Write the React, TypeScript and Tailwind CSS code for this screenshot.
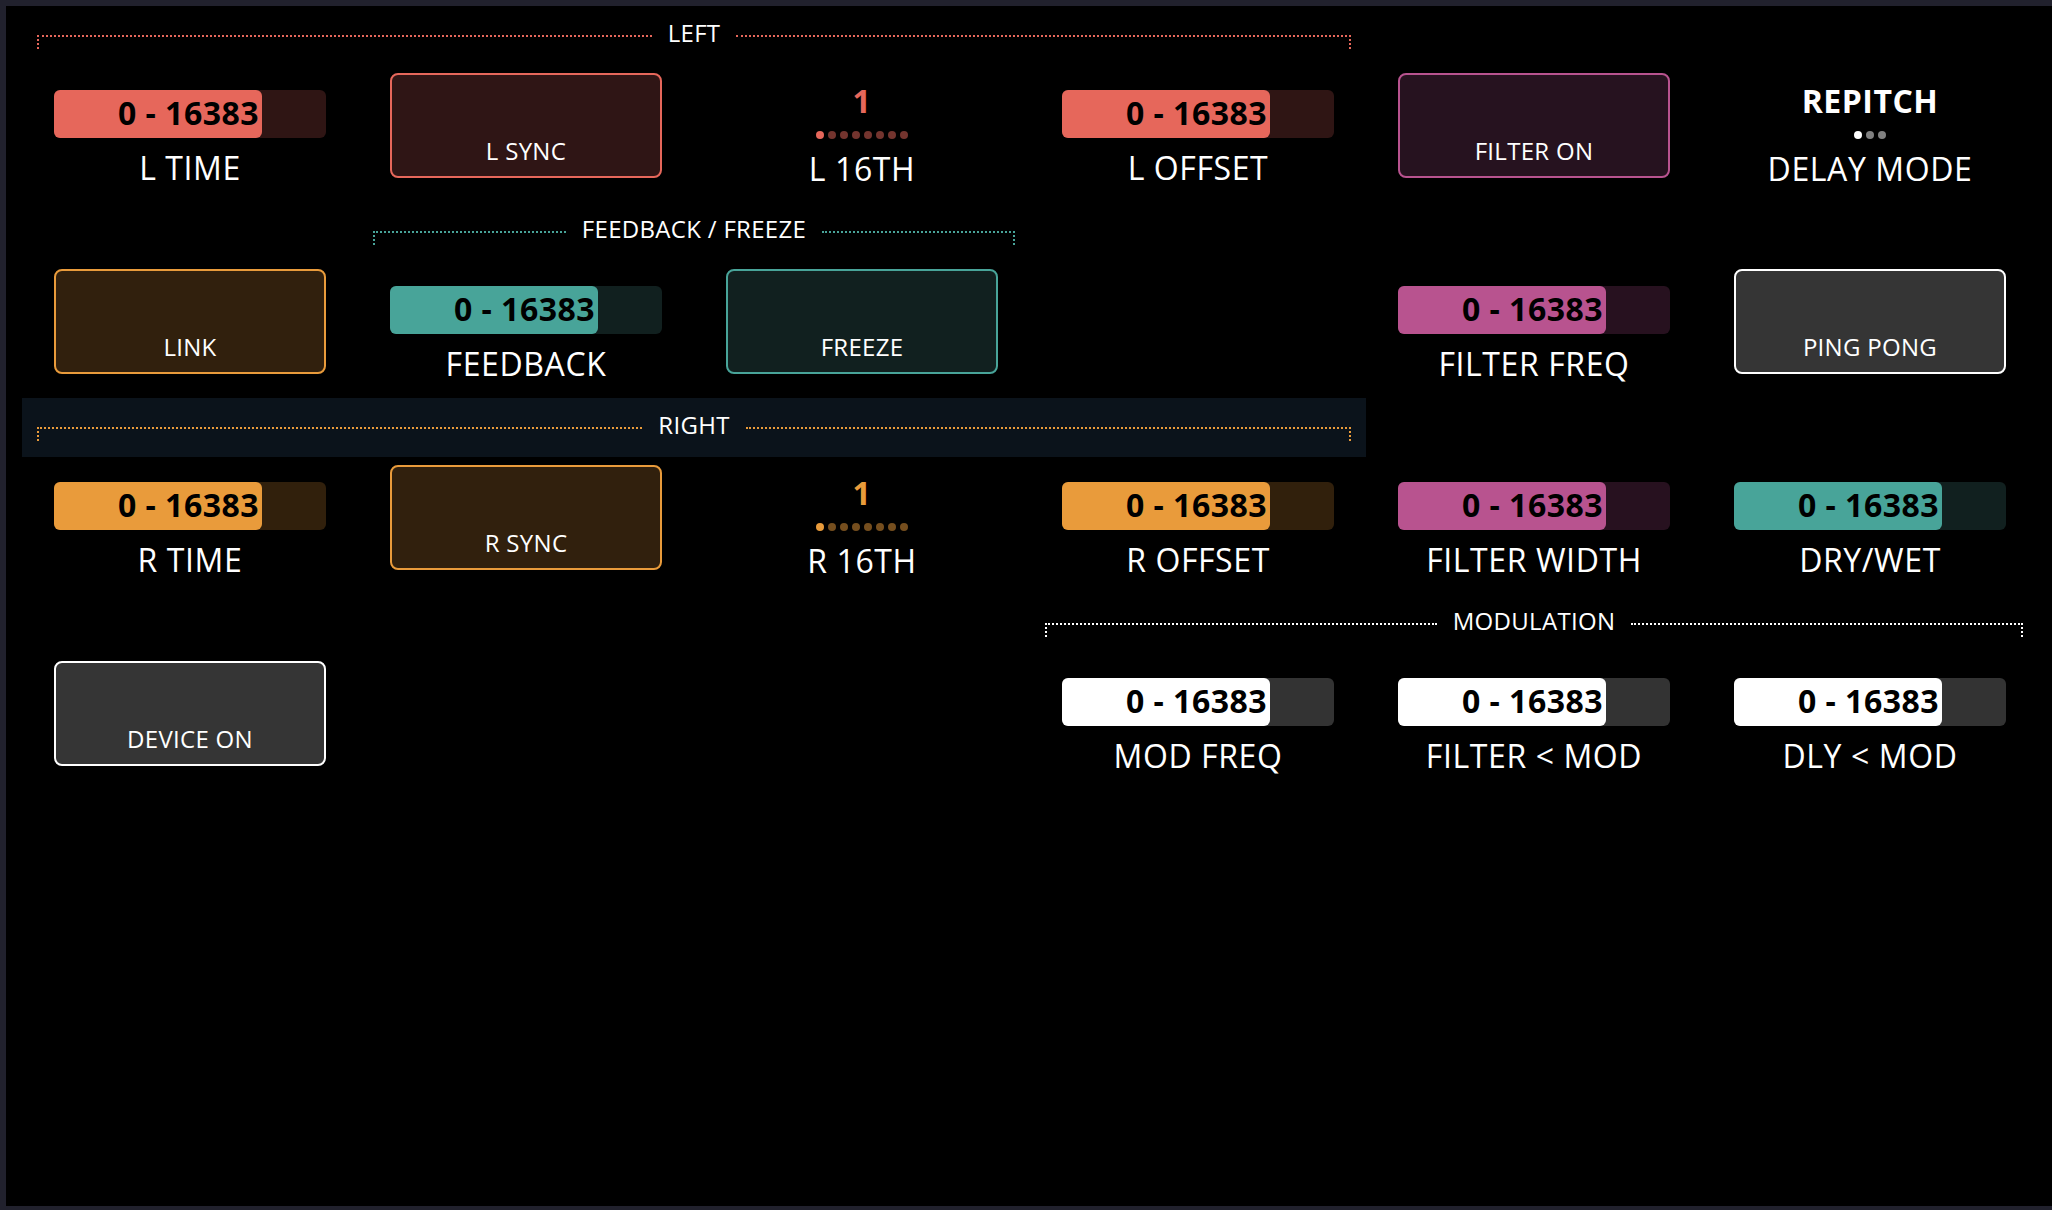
type Theme = {
  fill: string;
  track: string;
  btn: string;
  dot: string;
  line: string;
};

const themes: Record<string, Theme> = {
  red: {
    fill: "bg-[#e6675b]",
    track: "bg-[#2f1514]",
    btn: "bg-[#2f1515] border-[#e6675b]",
    dot: "bg-[#e6675b]",
    line: "border-[#e6675b]",
  },
  orange: {
    fill: "bg-[#e99b3b]",
    track: "bg-[#31200c]",
    btn: "bg-[#31200d] border-[#e99b3b]",
    dot: "bg-[#e99b3b]",
    line: "border-[#e99b3b]",
  },
  teal: {
    fill: "bg-[#48a499]",
    track: "bg-[#11201f]",
    btn: "bg-[#11201f] border-[#48a499]",
    dot: "bg-[#48a499]",
    line: "border-[#48a499]",
  },
  pink: {
    fill: "bg-[#b8538f]",
    track: "bg-[#27111f]",
    btn: "bg-[#26121f] border-[#b8538f]",
    dot: "bg-[#b8538f]",
    line: "border-[#b8538f]",
  },
  white: {
    fill: "bg-white",
    track: "bg-[#333333]",
    btn: "bg-[#353535] border-white",
    dot: "bg-white",
    line: "border-white",
  },
};

const Label = ({ children }: { children: string }) => (
  <div className="mt-[14px] text-[32px] leading-[32px] tracking-[0.6px] text-white text-center whitespace-nowrap">{children}</div>
);

const Slider = ({ label, t }: { label: string; t: Theme }) => (
  <div className="w-[272px] flex flex-col items-center">
    <div className={`mt-[17px] w-full h-[48px] rounded-[6px] flex ${t.track}`}>
      <div className={`w-[76.5%] h-full rounded-[6px] flex items-center justify-end pr-[3px] pb-[3px] ${t.fill}`}>
        <span className="text-[32px] leading-[32px] tracking-[0.5px] font-bold text-black whitespace-nowrap">0 - 16383</span>
      </div>
    </div>
    <Label>{label}</Label>
  </div>
);

const Toggle = ({ label, t }: { label: string; t: Theme }) => (
  <div className={`w-[272px] h-[105px] rounded-[8px] border-2 flex flex-col justify-end items-center pb-[13px] ${t.btn}`}>
    <span className="text-[24px] leading-[24px] tracking-[0.3px] text-white">{label}</span>
  </div>
);

const Enum = ({ value, label, t, count, valueColor }: { value: string; label: string; t: Theme; count: number; valueColor: string }) => (
  <div className="w-[272px] flex flex-col items-center">
    <div className={`mt-[12px] text-[32px] leading-[31px] tracking-[0.5px] font-bold ${valueColor}`}>{value}</div>
    <div className="mt-[15px] flex gap-[4px]">
      {Array.from({ length: count }).map((_, i) => (
        <div key={i} className={`w-[8px] h-[8px] rounded-full ${t.dot} ${i === 0 ? "" : "opacity-50"}`} />
      ))}
    </div>
    <Label>{label}</Label>
  </div>
);

const Cell = ({ children }: { children?: React.ReactNode }) => (
  <div className="h-[137px] pt-[8px] flex justify-center">{children}</div>
);

const Band = ({ title, t, className }: { title: string; t: Theme; className: string }) => (
  <div className={`h-[59px] px-[15px] flex items-start ${className}`}>
    <div className={`flex-1 mt-[29px] h-[14px] border-t-2 border-l-2 border-dotted ${t.line}`} />
    <span className="mx-[16px] mt-[15px] text-[24px] leading-[24px] tracking-[0.3px] text-white whitespace-nowrap">{title}</span>
    <div className={`flex-1 mt-[29px] h-[14px] border-t-2 border-r-2 border-dotted ${t.line}`} />
  </div>
);

const Row = ({ children }: { children?: React.ReactNode }) => (
  <div className="grid grid-cols-[repeat(6,336px)]">{children}</div>
);

export default function App() {
  const { red, orange, teal, pink, white } = themes;
  return (
    <div className="w-[2052px] h-[1210px] bg-[#21212d] pt-[6px] pl-[6px] overflow-hidden" style={{ fontFamily: "'Open Sans', 'Noto Sans', sans-serif" }}>
      <div className="w-[2046px] h-[1200px] bg-black pl-[16px]">
        {/* LEFT */}
        <Row>
          <Band title="LEFT" t={red} className="col-span-4" />
        </Row>
        <Row>
          <Cell><Slider label="L TIME" t={red} /></Cell>
          <Cell><Toggle label="L SYNC" t={red} /></Cell>
          <Cell><Enum value="1" label="L 16TH" t={red} count={8} valueColor="text-[#e6675b]" /></Cell>
          <Cell><Slider label="L OFFSET" t={red} /></Cell>
          <Cell><Toggle label="FILTER ON" t={pink} /></Cell>
          <Cell><Enum value="REPITCH" label="DELAY MODE" t={white} count={3} valueColor="text-white" /></Cell>
        </Row>

        {/* FEEDBACK / FREEZE */}
        <Row>
          <Band title="FEEDBACK / FREEZE" t={teal} className="col-start-2 col-span-2" />
        </Row>
        <Row>
          <Cell><Toggle label="LINK" t={orange} /></Cell>
          <Cell><Slider label="FEEDBACK" t={teal} /></Cell>
          <Cell><Toggle label="FREEZE" t={teal} /></Cell>
          <Cell />
          <Cell><Slider label="FILTER FREQ" t={pink} /></Cell>
          <Cell><Toggle label="PING PONG" t={white} /></Cell>
        </Row>

        {/* RIGHT */}
        <Row>
          <Band title="RIGHT" t={orange} className="col-span-4 bg-[#0b131b]" />
        </Row>
        <Row>
          <Cell><Slider label="R TIME" t={orange} /></Cell>
          <Cell><Toggle label="R SYNC" t={orange} /></Cell>
          <Cell><Enum value="1" label="R 16TH" t={orange} count={8} valueColor="text-[#e99b3b]" /></Cell>
          <Cell><Slider label="R OFFSET" t={orange} /></Cell>
          <Cell><Slider label="FILTER WIDTH" t={pink} /></Cell>
          <Cell><Slider label="DRY/WET" t={teal} /></Cell>
        </Row>

        {/* MODULATION */}
        <Row>
          <Band title="MODULATION" t={white} className="col-start-4 col-span-3" />
        </Row>
        <Row>
          <Cell><Toggle label="DEVICE ON" t={white} /></Cell>
          <Cell />
          <Cell />
          <Cell><Slider label="MOD FREQ" t={white} /></Cell>
          <Cell><Slider label="FILTER < MOD" t={white} /></Cell>
          <Cell><Slider label="DLY < MOD" t={white} /></Cell>
        </Row>
      </div>
    </div>
  );
}
